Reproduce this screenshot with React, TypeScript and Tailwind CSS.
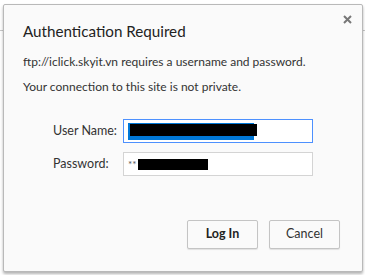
export default function App() {
  return (
    <div className="relative w-[365px] h-[275px] bg-white overflow-hidden" style={{ fontFamily: 'Lato, "Noto Sans", sans-serif' }}>
      {/* browser toolbar line behind the dialog */}
      <div className="absolute left-0 right-0 top-[30px] h-px bg-[#c8c8c8]" />
      <div className="absolute left-[3px] top-[4px] w-[360px] h-[268px] bg-[#fafafa] border border-[#b9b9b9] rounded-[2px] shadow-[0_2px_3px_rgba(0,0,0,0.3)] flex flex-col">
        <button className="absolute right-[10px] top-[9px] w-[10px] h-[10px] flex items-center justify-center">
          <svg width="9" height="9" viewBox="0 0 9 9">
            <path d="M1 1 L8 8 M8 1 L1 8" stroke="#777" strokeWidth="2" />
          </svg>
        </button>
        <div className="pl-[19px] pt-[15px] text-[15.2px] leading-[23px] text-[#222]">Authentication Required</div>
        <div className="pl-[19px] pt-[10px] text-[12px] leading-[17px] text-[#333]">ftp://iclick.skyit.vn requires a username and password.</div>
        <div className="pl-[19px] pt-[8px] text-[12px] leading-[17px] text-[#333]">Your connection to this site is not private.</div>
        <div className="mt-[24px] grid grid-cols-[70px_190px] gap-y-[9px] pl-[49px] items-center text-[12.5px] text-[#333]">
          <div>User Name:</div>
          <div className="h-[24px] border border-[#4d90fe] bg-white flex items-center pl-[4px]">
            <div className="relative w-[126px] h-[17px] bg-[#0078d7]">
              <div className="absolute left-[2px] top-[1px] w-[127px] h-[12px] bg-black" />
            </div>
          </div>
          <div>Password:</div>
          <div className="h-[24px] border border-[#d4d4d4] bg-white flex items-center pl-[4px] gap-[1px]">
            <span className="text-[10px] text-[#555] leading-none">**</span>
            <div className="w-[70px] h-[11px] bg-black" />
          </div>
        </div>
        <div className="mt-auto mb-[22px] flex justify-end gap-[11px] pr-[22px]">
          <button className="w-[71px] h-[29px] border border-[#c4c4c4] bg-[#fafafa] rounded-[2px] shadow-[0_1px_1px_rgba(0,0,0,0.1)] text-[12.5px] font-bold text-[#222]">Log In</button>
          <button className="w-[71px] h-[29px] border border-[#c4c4c4] bg-[#fafafa] rounded-[2px] shadow-[0_1px_1px_rgba(0,0,0,0.1)] text-[12.5px] text-[#333]">Cancel</button>
        </div>
      </div>
    </div>
  )
}
